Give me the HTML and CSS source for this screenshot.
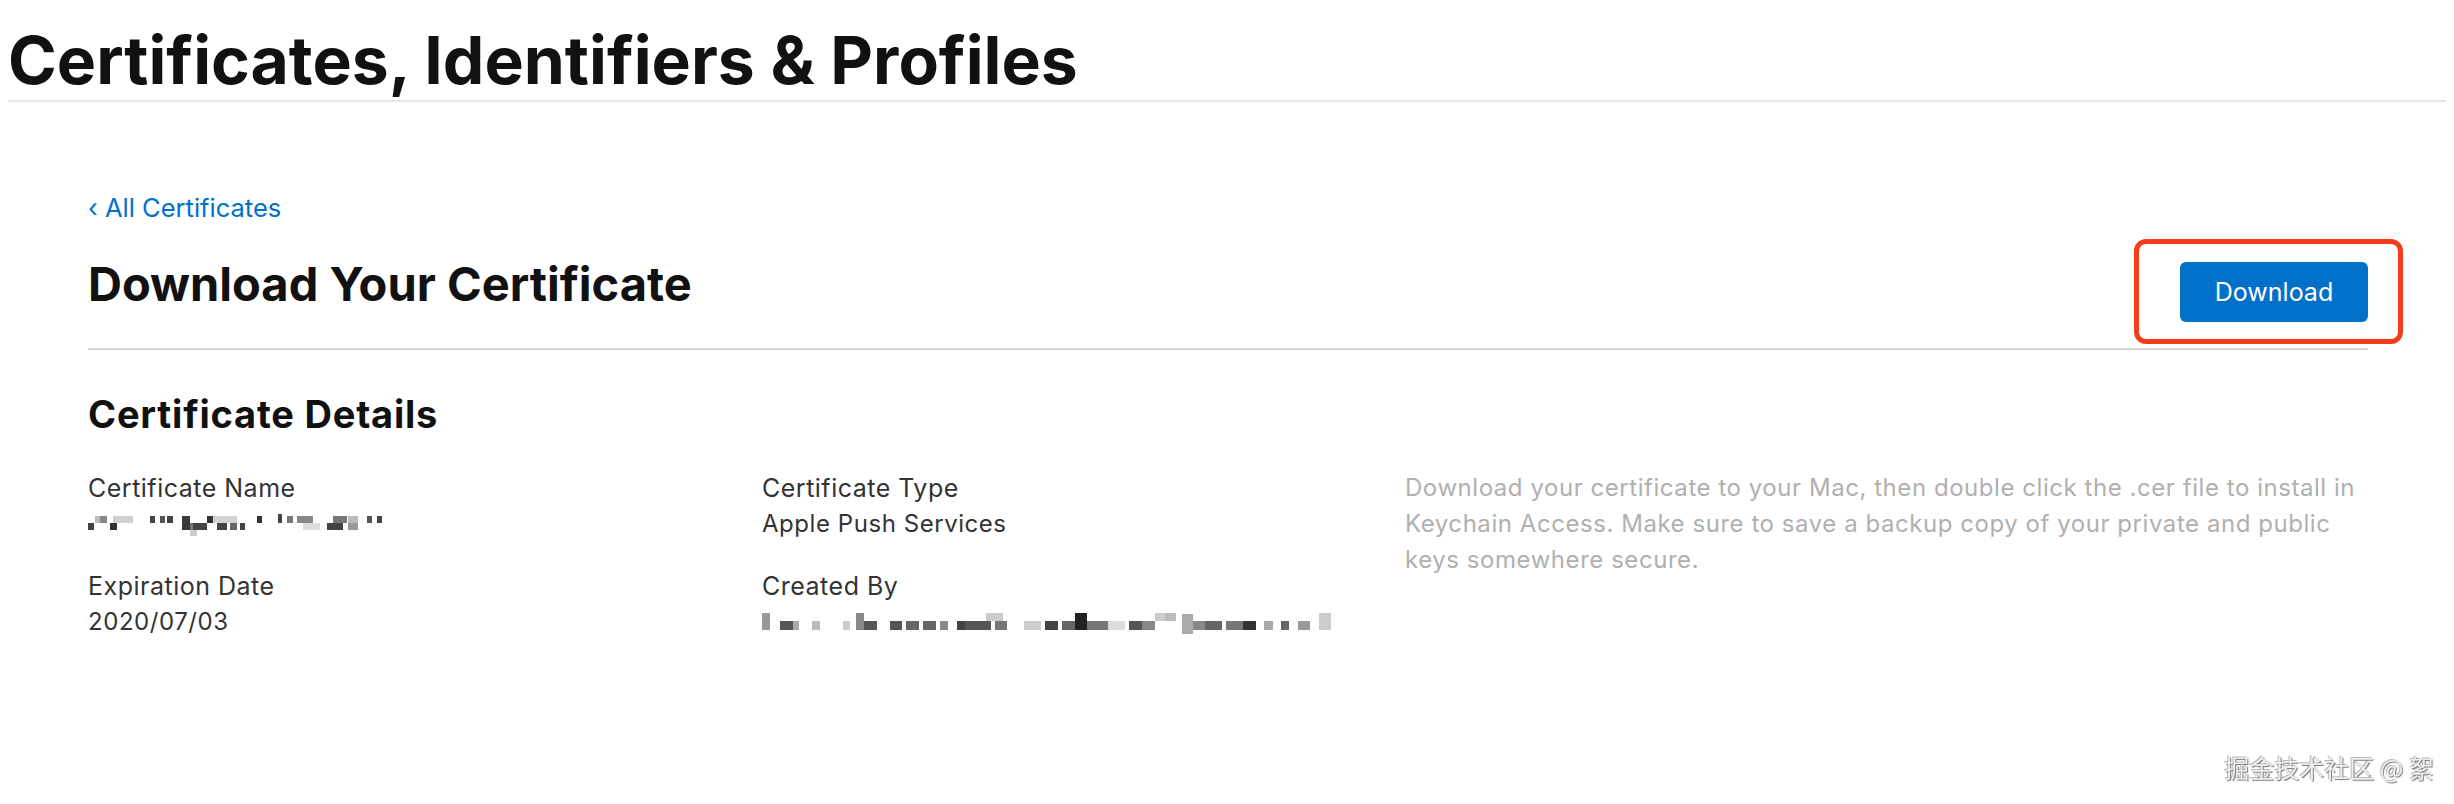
FILE: index.html
```html
<!DOCTYPE html>
<html lang="en">
<head>
<meta charset="utf-8">
<title>Certificates, Identifiers &amp; Profiles</title>
<link rel="stylesheet" href="styles.css">
</head>
<body>
<header class="top">
  <h1 class="page-title">Certificates, Identifiers &amp; Profiles</h1>
</header>
<main class="content">
  <a class="back" href="#">‹ All Certificates</a>
  <div class="head-row">
    <h2 class="cert-title">Download Your Certificate</h2>
    <div class="btn-wrap">
      <button class="btn" type="button">Download</button>
      <span class="highlight"></span>
    </div>
  </div>
  <section class="details">
    <h3 class="details-title">Certificate Details</h3>
    <div class="grid">
      <div class="col">
        <div class="field">
          <div class="label">Certificate Name</div>
          <div class="value">
            <svg class="mosaic" width="300" height="36" viewBox="0 0 300 36">
              <rect x="0" y="17" width="6" height="7" fill="#444"/>
              <rect x="7" y="10" width="10" height="7" fill="#bbb"/>
              <rect x="12" y="10" width="7" height="7" fill="#888"/>
              <rect x="22" y="17" width="7" height="7" fill="#333"/>
              <rect x="25" y="10" width="20" height="7" fill="#d0d0d0"/>
              <rect x="62" y="10" width="5" height="7" fill="#444"/>
              <rect x="72" y="10" width="5" height="7" fill="#555"/>
              <rect x="79" y="10" width="6" height="7" fill="#444"/>
              <rect x="94" y="10" width="8" height="14" fill="#3a3a3a"/>
              <rect x="102" y="17" width="7" height="7" fill="#777"/>
              <rect x="102" y="24" width="7" height="6" fill="#ccc"/>
              <rect x="105" y="17" width="14" height="7" fill="#444"/>
              <rect x="119" y="10" width="6" height="7" fill="#333"/>
              <rect x="125" y="10" width="24" height="7" fill="#d2d2d2"/>
              <rect x="129" y="17" width="10" height="7" fill="#444"/>
              <rect x="142" y="17" width="7" height="7" fill="#666"/>
              <rect x="152" y="17" width="5" height="7" fill="#444"/>
              <rect x="169" y="10" width="5" height="7" fill="#333"/>
              <rect x="190" y="8" width="4" height="9" fill="#444"/>
              <rect x="199" y="10" width="6" height="7" fill="#777"/>
              <rect x="209" y="10" width="16" height="7" fill="#888"/>
              <rect x="215" y="17" width="17" height="7" fill="#ddd"/>
              <rect x="239" y="17" width="16" height="7" fill="#444"/>
              <rect x="245" y="10" width="14" height="7" fill="#777"/>
              <rect x="260" y="10" width="10" height="7" fill="#bbb"/>
              <rect x="260" y="17" width="10" height="7" fill="#999"/>
              <rect x="279" y="10" width="5" height="7" fill="#555"/>
              <rect x="289" y="10" width="5" height="7" fill="#444"/>
            </svg>
          </div>
        </div>
        <div class="field">
          <div class="label">Expiration Date</div>
          <div class="value">2020/07/03</div>
        </div>
      </div>
      <div class="col">
        <div class="field">
          <div class="label">Certificate Type</div>
          <div class="value">Apple Push Services</div>
        </div>
        <div class="field">
          <div class="label">Created By</div>
          <div class="value">
            <svg class="mosaic" width="580" height="36" viewBox="0 0 580 36">
              <rect x="0" y="9" width="8" height="17" fill="#999"/>
              <rect x="18" y="17" width="13" height="9" fill="#555"/>
              <rect x="31" y="17" width="6" height="9" fill="#aaa"/>
              <rect x="50" y="17" width="8" height="9" fill="#bbb"/>
              <rect x="81" y="17" width="7" height="9" fill="#ccc"/>
              <rect x="94" y="9" width="8" height="17" fill="#888"/>
              <rect x="102" y="17" width="13" height="9" fill="#555"/>
              <rect x="128" y="17" width="12" height="9" fill="#555"/>
              <rect x="144" y="17" width="13" height="9" fill="#666"/>
              <rect x="161" y="17" width="13" height="9" fill="#666"/>
              <rect x="178" y="17" width="8" height="9" fill="#888"/>
              <rect x="195" y="17" width="10" height="9" fill="#444"/>
              <rect x="203" y="17" width="26" height="9" fill="#555"/>
              <rect x="224" y="9" width="17" height="8" fill="#ccc"/>
              <rect x="233" y="17" width="12" height="9" fill="#777"/>
              <rect x="262" y="17" width="17" height="9" fill="#ccc"/>
              <rect x="283" y="17" width="13" height="9" fill="#444"/>
              <rect x="300" y="17" width="13" height="9" fill="#666"/>
              <rect x="313" y="9" width="12" height="17" fill="#222"/>
              <rect x="325" y="17" width="21" height="9" fill="#777"/>
              <rect x="346" y="17" width="17" height="9" fill="#ddd"/>
              <rect x="367" y="17" width="13" height="9" fill="#555"/>
              <rect x="380" y="17" width="13" height="9" fill="#888"/>
              <rect x="393" y="9" width="10" height="8" fill="#ccc"/>
              <rect x="403" y="9" width="11" height="8" fill="#bbb"/>
              <rect x="420" y="10" width="11" height="20" fill="#aaa"/>
              <rect x="431" y="17" width="12" height="9" fill="#888"/>
              <rect x="443" y="17" width="17" height="9" fill="#666"/>
              <rect x="464" y="17" width="17" height="9" fill="#777"/>
              <rect x="481" y="17" width="13" height="9" fill="#333"/>
              <rect x="502" y="17" width="9" height="9" fill="#aaa"/>
              <rect x="519" y="17" width="8" height="9" fill="#666"/>
              <rect x="536" y="17" width="12" height="9" fill="#999"/>
              <rect x="557" y="9" width="12" height="17" fill="#ccc"/>
            </svg>
          </div>
        </div>
      </div>
      <p class="note">Download your certificate to your Mac, then double click the .cer file to install in Keychain Access. Make sure to save a backup copy of your private and public keys somewhere secure.</p>
    </div>
  </section>
</main>
<div class="watermark">掘金技术社区 @ 絮</div>
</body>
</html>
```

FILE: styles.css
```css
html, body {
  margin: 0;
  padding: 0;
  background: #ffffff;
}

body {
  font-family: Inter, "Liberation Sans", "Noto Sans CJK SC", sans-serif;
  color: #333333;
}

.top {
  margin: 0 8px;
  padding-top: 20px;
  border-bottom: 2px solid #e6e6e6;
}

.page-title {
  margin: 0;
  font-size: 66px;
  line-height: 80px;
  font-weight: 700;
  color: #111111;
  letter-spacing: 0;
}

.content {
  padding: 90px 86px 0 88px;
}

.back {
  display: block;
  font-size: 25.5px;
  line-height: 32px;
  color: #0070c9;
  text-decoration: none;
}

.head-row {
  display: flex;
  justify-content: space-between;
  align-items: flex-start;
  margin-top: 30px;
  padding-bottom: 26px;
  border-bottom: 2px solid #d6d6d6;
}

.cert-title {
  margin: 0;
  font-size: 47px;
  line-height: 60px;
  font-weight: 700;
  color: #111111;
}

.btn-wrap {
  position: relative;
  margin-top: 8px;
}

.btn {
  display: block;
  width: 188px;
  height: 60px;
  padding: 0;
  border: 0;
  border-radius: 6px;
  background: #0070c9;
  color: #ffffff;
  font-family: Inter, "Liberation Sans", sans-serif;
  font-size: 25px;
  line-height: 60px;
}

.highlight {
  position: absolute;
  left: -46px;
  top: -23px;
  width: 269px;
  height: 105px;
  box-sizing: border-box;
  border: 5px solid #f23c1a;
  border-radius: 12px;
}

.details-title {
  margin: 42px 0 0;
  font-size: 38px;
  line-height: 44px;
  font-weight: 700;
  color: #111111;
  letter-spacing: 0.8px;
}

.grid {
  display: grid;
  grid-template-columns: 674px 643px 1fr;
  margin-top: 34px;
}

.field + .field {
  margin-top: 26px;
}

.label {
  font-size: 25px;
  line-height: 36px;
  letter-spacing: 0.5px;
  color: #333333;
}

.value {
  font-size: 24px;
  line-height: 36px;
  letter-spacing: 0.55px;
  color: #333333;
}

.mosaic {
  display: block;
}

.note {
  margin: 0;
  font-size: 24px;
  line-height: 36px;
  letter-spacing: 0.55px;
  color: #b0b0b0;
}

.watermark {
  position: fixed;
  right: 20px;
  bottom: 24px;
  font-family: "Noto Sans CJK SC", sans-serif;
  font-size: 25px;
  line-height: 25px;
  color: #eeeeee;
  text-shadow: 1px 1px 1px #777777, -1px -1px 0 #bbbbbb;
}
```
